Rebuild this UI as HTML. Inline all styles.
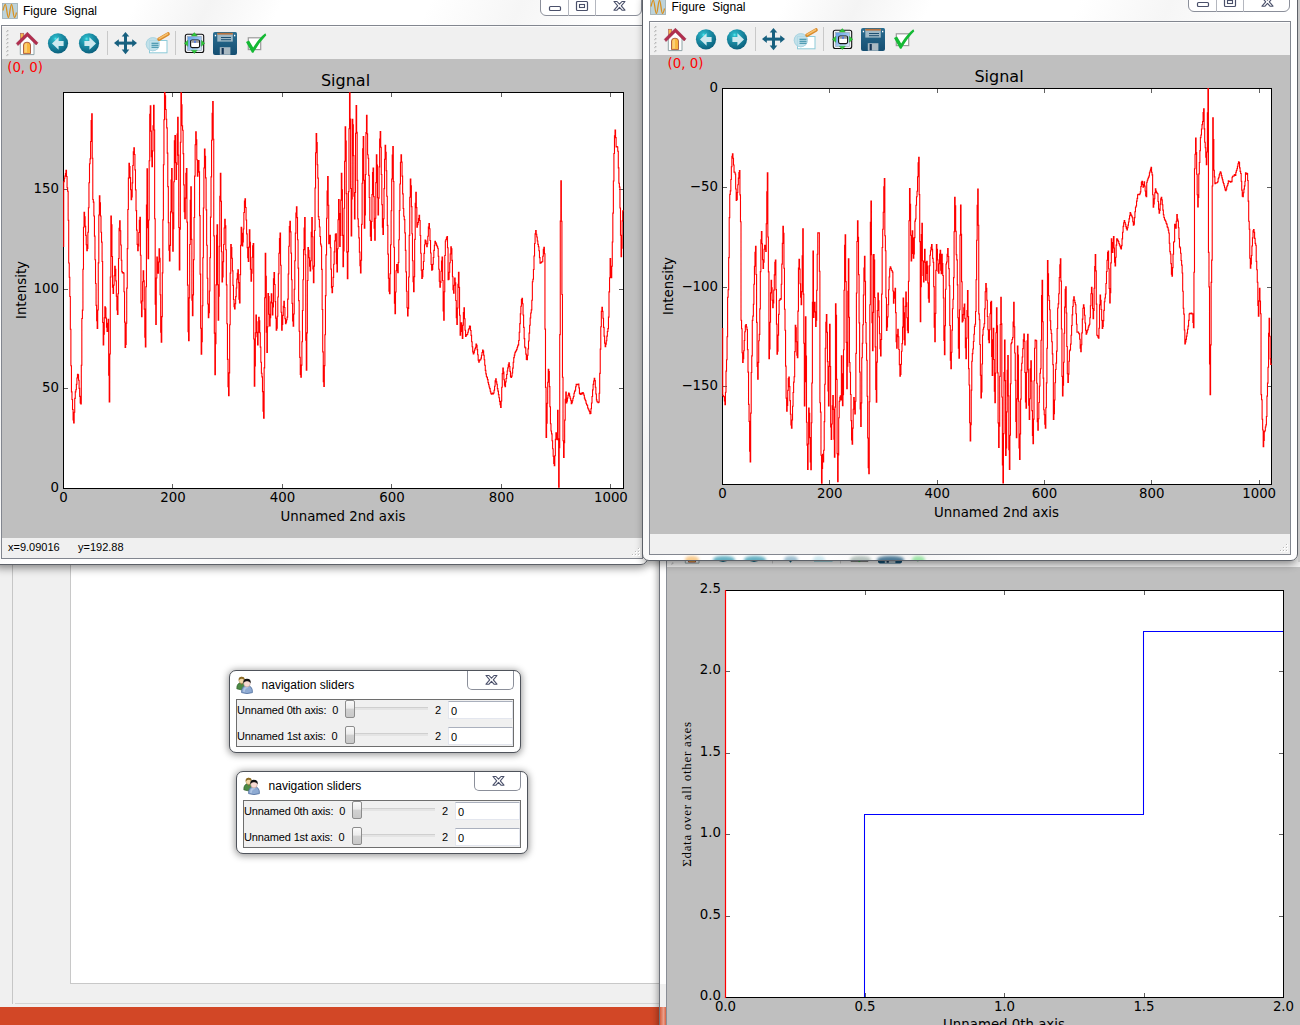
<!DOCTYPE html>
<html><head><meta charset="utf-8"><title>Figure Signal</title>
<style>
html,body{margin:0;padding:0}
body{width:1300px;height:1025px;position:relative;overflow:hidden;background:#f0f0f0;font-family:"Liberation Sans",sans-serif;font-size:12px;color:#000}
div,svg,span{position:absolute}
.mpl{font-family:"DejaVu Sans","Liberation Sans",sans-serif;white-space:nowrap;line-height:1;color:#000}
.tk{font-size:13.33px}
.lb{font-size:13.33px}
.tt{font-size:16px}
.wc{background:#fff;border:1px solid #8b8f9a;border-radius:0 0 6px 6px;box-sizing:border-box}
.wcd{width:1px;background:#b4b7bf}
.ui{white-space:nowrap;line-height:1}
.rot{transform:rotate(-90deg);transform-origin:0 0}
.dl{font-size:11px;letter-spacing:-0.14px}
.sh2{box-shadow:0 1px 7px 1px rgba(0,0,0,0.4)}
.sh{box-shadow:0 5px 8px -2px rgba(0,0,0,0.45)}
</style></head><body>
<svg width="0" height="0" style="left:0;top:0"><defs>
<radialGradient id="gteal" cx="0.38" cy="0.28" r="0.75"><stop offset="0" stop-color="#55f0f5"/><stop offset="0.12" stop-color="#2ab4c4"/><stop offset="0.45" stop-color="#1b8ea6"/><stop offset="1" stop-color="#0b5f7c"/></radialGradient>
<linearGradient id="gblue" x1="0" y1="0" x2="1" y2="1"><stop offset="0" stop-color="#5c9be6"/><stop offset="1" stop-color="#d8ecfb"/></linearGradient>
<linearGradient id="gsave" x1="0" y1="0" x2="0" y2="1"><stop offset="0" stop-color="#2a6d90"/><stop offset="1" stop-color="#154f72"/></linearGradient>
</defs></svg>
<!-- background application -->
<div style="left:12px;top:560px;width:1px;height:444px;background:#c6c6c6"></div>
<div style="left:15px;top:1003px;width:650px;height:1px;background:#d4d4d4"></div>
<div style="left:70px;top:540px;width:600px;height:444px;background:#fff;border:1px solid #c8c8c8;box-sizing:border-box"></div>
<div style="left:0;top:1007px;width:1300px;height:18px;background:#d24726"></div>
<!-- third figure window (behind) -->
<div style="left:659px;top:540px;width:660px;height:500px;background:#fff;border:1px solid #6f737b;box-sizing:border-box;box-shadow:-1px 0 7px rgba(0,0,0,0.4)"></div><div style="left:660px;top:984px;width:6px;height:23px;background:#f0f0f0"></div><div style="left:660px;top:1007px;width:6px;height:18px;background:linear-gradient(90deg,#d9603f,#e9a08c 60%,#d9603f)"></div><div style="left:666px;top:540px;width:640px;height:500px;background:#f0f0f0;border-left:1px solid #8a8e96"></div><div style="left:667px;top:567px;width:640px;height:470px;background:#bfbfbf"></div><div style="left:725px;top:590px;width:559px;height:408px;background:#fff"></div><svg style="left:0;top:0" width="1300" height="1025" viewBox="0 0 1300 1025"><polyline points="725.5,997.5 864.5,997.5 864.5,814.5 1143.5,814.5 1143.5,631.5 1283,631.5" fill="none" stroke="#0000ff" stroke-width="1.05"/><rect x="725.5" y="590.5" width="558" height="407" fill="none" stroke="#000" stroke-width="1" shape-rendering="crispEdges"/><g stroke="#000" stroke-width="1" stroke-opacity="0.62"><path d="M865.5 997 V993 M865.5 591 V595"/><path d="M1004.5 997 V993 M1004.5 591 V595"/><path d="M1144.5 997 V993 M1144.5 591 V595"/><path d="M726 671.5 H730 M1283 671.5 H1279"/><path d="M726 753.5 H730 M1283 753.5 H1279"/><path d="M726 834.5 H730 M1283 834.5 H1279"/><path d="M726 916.5 H730 M1283 916.5 H1279"/></g><path d="M725.5 590 V998" stroke="#ff0000" stroke-width="1.2"/></svg><svg style="left:0;top:500px" width="1300" height="70" viewBox="0 500 1300 70"><g transform="translate(665 508.5)">
<g>
<!-- grip -->
<g fill="#b8b8b8"><rect x="7" y="30" width="1.4" height="1.4"/><rect x="6" y="31" width="1.4" height="1.2" fill="#c8c8c8"/><rect x="7" y="34" width="1.4" height="1.4"/><rect x="6" y="35" width="1.4" height="1.2" fill="#c8c8c8"/><rect x="7" y="38" width="1.4" height="1.4"/><rect x="6" y="39" width="1.4" height="1.2" fill="#c8c8c8"/><rect x="7" y="42" width="1.4" height="1.4"/><rect x="6" y="43" width="1.4" height="1.2" fill="#c8c8c8"/><rect x="7" y="46" width="1.4" height="1.4"/><rect x="6" y="47" width="1.4" height="1.2" fill="#c8c8c8"/><rect x="7" y="50" width="1.4" height="1.4"/><rect x="6" y="51" width="1.4" height="1.2" fill="#c8c8c8"/><rect x="7" y="54" width="1.4" height="1.4"/><rect x="6" y="55" width="1.4" height="1.2" fill="#c8c8c8"/></g>
<!-- home -->
<rect x="20.5" y="33.3" width="3.2" height="6" fill="#f7b64a" stroke="#b4645a" stroke-width="0.7"/>
<path d="M20.3 42 L27.3 35.5 L34 42 L34 54.6 L20.3 54.6 Z" fill="#fdfdfd" stroke="#8fa3a6" stroke-width="1"/>
<path d="M23.5 53.6 L23.5 45 Q23.5 42.2 27 42.2 Q30.5 42.2 30.5 45 L30.5 53.6 Z" fill="#f9b840" stroke="#a8553a" stroke-width="0.9"/>
<path d="M24.5 52.6 L24.5 45 Q24.5 43.2 27 43.2 L27 52.6 Z" fill="#fcd890" opacity="0.7"/>
<path d="M16.3 43.3 L27.4 32.2 L38 42.8 L36.2 45 L27.4 36.2 L18 45.6 Z" fill="#b32d4e" stroke="#8e2540" stroke-width="0.5"/>
<!-- back -->
<circle cx="58" cy="43.3" r="10.1" fill="url(#gteal)"/>
<path d="M52 43.5 L58.6 37.3 L58.6 41 L63.6 41 L63.6 46 L58.6 46 L58.6 49.7 Z" fill="#cfe9ef"/>
<!-- forward -->
<circle cx="89" cy="43.3" r="10.1" fill="url(#gteal)"/>
<path d="M96 43.5 L89.4 37.3 L89.4 41 L84.4 41 L84.4 46 L89.4 46 L89.4 49.7 Z" fill="#cfe9ef"/>
<!-- sep -->
<rect x="107" y="31" width="1" height="24" fill="#c9c9c9"/>
<!-- move -->
<g fill="#17607f" stroke="none">
<rect x="124" y="35" width="3" height="16"/><rect x="117" y="41.6" width="17" height="3"/>
<path d="M125.5 32 L129.3 36.6 L121.7 36.6 Z"/><path d="M125.5 54.2 L129.3 49.6 L121.7 49.6 Z"/>
<path d="M114 43.1 L118.8 39.2 L118.8 47 Z"/><path d="M137 43.1 L132.2 39.2 L132.2 47 Z"/>
</g>
<!-- zoom -->
<rect x="149.5" y="40.5" width="17.5" height="12.3" fill="#ffffff" stroke="#8ecbd9" stroke-width="1"/>
<circle cx="152.8" cy="44.2" r="7" fill="#b9dde8" opacity="0.85"/>
<circle cx="152.8" cy="44.2" r="6.6" fill="none" stroke="#a5d0de" stroke-width="0.8"/>
<g stroke="#2f87a3" stroke-width="1.1"><path d="M151.5 43.2 H158.5 M151.5 45.2 H158.5 M151.5 47.2 H158.5"/></g>
<path d="M159 39.2 L168 34" stroke="#d98a2b" stroke-width="3.6" stroke-linecap="round"/>
<path d="M159.2 38.6 L167.6 33.8" stroke="#f7c06c" stroke-width="1.6" stroke-linecap="round"/>
<!-- sep -->
<rect x="175" y="31" width="1" height="24" fill="#c9c9c9"/>
<!-- subplots -->
<rect x="185.3" y="34.3" width="18.4" height="18.2" rx="2" fill="#eef1f4" stroke="#111" stroke-width="1.1"/>
<rect x="187.6" y="36.4" width="13.8" height="14" fill="url(#gblue)" stroke="#9aa6b4" stroke-width="0.6"/>
<rect x="190.6" y="40" width="9" height="7.6" rx="1.6" fill="#fff" stroke="#111" stroke-width="1.1"/>
<rect x="191.3" y="40.6" width="7.6" height="2.2" fill="#9a9a9a"/><rect x="194" y="40.6" width="2" height="2.2" fill="#5a7fe0"/>
<g fill="#2fc83a" stroke="#1c9a2a" stroke-width="0.4">
<path d="M194.3 32.6 L197.3 36 L191.3 36 Z"/><path d="M194.3 53.6 L197.3 50.2 L191.3 50.2 Z"/>
<path d="M184.4 43.3 L187.8 40.3 L187.8 46.3 Z"/><path d="M204.8 43.3 L201.4 40.3 L201.4 46.3 Z"/>
</g>
<!-- save -->
<path d="M215 32 H235.5 Q237 32 237 33.5 V53 Q237 55 235 55 H215 Q213 55 213 53 V34 Q213 32 215 32 Z" fill="url(#gsave)"/>
<rect x="217.3" y="33" width="15.5" height="8.6" fill="#9fb9c6"/>
<rect x="217.3" y="32.8" width="15.5" height="1.8" fill="#b5713e"/>
<rect x="221" y="37" width="10" height="1" fill="#1d4f70"/><rect x="221" y="39.2" width="10" height="1" fill="#1d4f70"/>
<rect x="214.8" y="34.8" width="1.3" height="1.5" fill="#fff"/><rect x="234" y="34.8" width="1.3" height="1.5" fill="#fff"/>
<rect x="219.8" y="47.2" width="10.6" height="7.6" fill="#a9b9c2"/>
<rect x="221.6" y="48" width="2.2" height="6.2" fill="#153556"/>
<!-- check -->
<rect x="248.3" y="37.8" width="12.4" height="11.8" fill="#fff" stroke="#9b9b9b" stroke-width="1.2"/>
<path d="M246 42 L249 40.5 L253.2 47.4 Q259 38 265.3 33.2 L266.3 35.2 Q259 42.5 253.4 52.8 L252 52.8 Z" fill="#14b934"/>
</g></g></svg><span class="mpl tk" style="left:695.50px;top:1000.4px;width:60px;text-align:center">0.0</span><span class="mpl tk" style="left:835.00px;top:1000.4px;width:60px;text-align:center">0.5</span><span class="mpl tk" style="left:974.50px;top:1000.4px;width:60px;text-align:center">1.0</span><span class="mpl tk" style="left:1114.00px;top:1000.4px;width:60px;text-align:center">1.5</span><span class="mpl tk" style="left:1253.50px;top:1000.4px;width:60px;text-align:center">2.0</span><span class="mpl tk" style="left:661px;top:582.00px;width:60px;text-align:right">2.5</span><span class="mpl tk" style="left:661px;top:663.40px;width:60px;text-align:right">2.0</span><span class="mpl tk" style="left:661px;top:744.80px;width:60px;text-align:right">1.5</span><span class="mpl tk" style="left:661px;top:826.20px;width:60px;text-align:right">1.0</span><span class="mpl tk" style="left:661px;top:907.60px;width:60px;text-align:right">0.5</span><span class="mpl tk" style="left:661px;top:989.00px;width:60px;text-align:right">0.0</span><span class="mpl lb" style="left:904px;top:1018.3px;width:200px;text-align:center">Unnamed 0th axis</span><span class="rot" style="left:680px;top:894px;width:200px;text-align:center;font-family:'Liberation Serif',serif;font-size:13px;line-height:1;white-space:nowrap;letter-spacing:0.7px">Σdata over all other axes</span><!-- left figure window -->
<div class="sh" style="left:-8px;top:-10px;width:656px;height:575px;background:linear-gradient(115deg,#fff 0%,#fff 16%,#f4f4f4 24%,#fff 32%,#fff 48%,#f6f6f6 58%,#fff 68%,#fff 100%);border:1px solid #5d6168;border-radius:7px;box-sizing:border-box"></div><svg style="left:2px;top:3px" width="16" height="16" viewBox="0 0 16 16"><rect x="0.4" y="0.4" width="15.2" height="15.2" fill="#bdd3da" stroke="#9eadb1" stroke-width="0.8"/><path d="M1 7.5 C1.8 4 2.5 1.4 3.3 1.4 C4.6 1.4 5.1 14.5 6.4 14.5 C7.7 14.5 8.2 1.4 9.5 1.4 C10.8 1.4 11.2 14.5 12.5 14.5 C13.4 14.5 13.9 12 14.5 9.5" fill="none" stroke="#d9901e" stroke-width="1.25"/></svg><span class="ui" style="left:23px;top:5px;font-size:12px">Figure&nbsp; Signal</span><div class="wc" style="left:540px;top:-8px;width:102px;height:24px"></div><div class="wcd" style="left:568px;top:0;height:16px"></div><div class="wcd" style="left:595px;top:0;height:16px"></div><svg style="left:540px;top:-0.1999999999999993px" width="102" height="16" viewBox="0 0 102 16"><rect x="9.5" y="6.5" width="11" height="4" rx="1" fill="#fff" stroke="#4a506a" stroke-width="1.2"/><rect x="36.5" y="1.5" width="11" height="9" rx="1" fill="#fff" stroke="#4a506a" stroke-width="1.2"/><rect x="39.5" y="4.5" width="5" height="3" fill="#fff" stroke="#4a506a" stroke-width="1.1"/><path d="M74 1.5 L77 1.5 L79.5 4.2 L82 1.5 L85 1.5 L81.3 5.8 L85 10.2 L82 10.2 L79.5 7.4 L77 10.2 L74 10.2 L77.7 5.8 Z" fill="#fff" stroke="#4a506a" stroke-width="1.1" stroke-linejoin="round"/></svg><div style="left:1px;top:25px;width:642px;height:534px;background:#f0f0f0;border:1px solid #82868f;box-sizing:border-box"></div><div style="left:2px;top:26px;width:640px;height:1px;background:#fcfcfc"></div><div style="left:2px;top:59px;width:640px;height:479px;background:#bfbfbf"></div><div style="left:63px;top:92px;width:561px;height:397px;background:#fff"></div><svg style="left:0;top:0" width="1300" height="570" viewBox="0 0 1300 570"><g transform="translate(0 0)">
<g>
<!-- grip -->
<g fill="#b8b8b8"><rect x="7" y="30" width="1.4" height="1.4"/><rect x="6" y="31" width="1.4" height="1.2" fill="#c8c8c8"/><rect x="7" y="34" width="1.4" height="1.4"/><rect x="6" y="35" width="1.4" height="1.2" fill="#c8c8c8"/><rect x="7" y="38" width="1.4" height="1.4"/><rect x="6" y="39" width="1.4" height="1.2" fill="#c8c8c8"/><rect x="7" y="42" width="1.4" height="1.4"/><rect x="6" y="43" width="1.4" height="1.2" fill="#c8c8c8"/><rect x="7" y="46" width="1.4" height="1.4"/><rect x="6" y="47" width="1.4" height="1.2" fill="#c8c8c8"/><rect x="7" y="50" width="1.4" height="1.4"/><rect x="6" y="51" width="1.4" height="1.2" fill="#c8c8c8"/><rect x="7" y="54" width="1.4" height="1.4"/><rect x="6" y="55" width="1.4" height="1.2" fill="#c8c8c8"/></g>
<!-- home -->
<rect x="20.5" y="33.3" width="3.2" height="6" fill="#f7b64a" stroke="#b4645a" stroke-width="0.7"/>
<path d="M20.3 42 L27.3 35.5 L34 42 L34 54.6 L20.3 54.6 Z" fill="#fdfdfd" stroke="#8fa3a6" stroke-width="1"/>
<path d="M23.5 53.6 L23.5 45 Q23.5 42.2 27 42.2 Q30.5 42.2 30.5 45 L30.5 53.6 Z" fill="#f9b840" stroke="#a8553a" stroke-width="0.9"/>
<path d="M24.5 52.6 L24.5 45 Q24.5 43.2 27 43.2 L27 52.6 Z" fill="#fcd890" opacity="0.7"/>
<path d="M16.3 43.3 L27.4 32.2 L38 42.8 L36.2 45 L27.4 36.2 L18 45.6 Z" fill="#b32d4e" stroke="#8e2540" stroke-width="0.5"/>
<!-- back -->
<circle cx="58" cy="43.3" r="10.1" fill="url(#gteal)"/>
<path d="M52 43.5 L58.6 37.3 L58.6 41 L63.6 41 L63.6 46 L58.6 46 L58.6 49.7 Z" fill="#cfe9ef"/>
<!-- forward -->
<circle cx="89" cy="43.3" r="10.1" fill="url(#gteal)"/>
<path d="M96 43.5 L89.4 37.3 L89.4 41 L84.4 41 L84.4 46 L89.4 46 L89.4 49.7 Z" fill="#cfe9ef"/>
<!-- sep -->
<rect x="107" y="31" width="1" height="24" fill="#c9c9c9"/>
<!-- move -->
<g fill="#17607f" stroke="none">
<rect x="124" y="35" width="3" height="16"/><rect x="117" y="41.6" width="17" height="3"/>
<path d="M125.5 32 L129.3 36.6 L121.7 36.6 Z"/><path d="M125.5 54.2 L129.3 49.6 L121.7 49.6 Z"/>
<path d="M114 43.1 L118.8 39.2 L118.8 47 Z"/><path d="M137 43.1 L132.2 39.2 L132.2 47 Z"/>
</g>
<!-- zoom -->
<rect x="149.5" y="40.5" width="17.5" height="12.3" fill="#ffffff" stroke="#8ecbd9" stroke-width="1"/>
<circle cx="152.8" cy="44.2" r="7" fill="#b9dde8" opacity="0.85"/>
<circle cx="152.8" cy="44.2" r="6.6" fill="none" stroke="#a5d0de" stroke-width="0.8"/>
<g stroke="#2f87a3" stroke-width="1.1"><path d="M151.5 43.2 H158.5 M151.5 45.2 H158.5 M151.5 47.2 H158.5"/></g>
<path d="M159 39.2 L168 34" stroke="#d98a2b" stroke-width="3.6" stroke-linecap="round"/>
<path d="M159.2 38.6 L167.6 33.8" stroke="#f7c06c" stroke-width="1.6" stroke-linecap="round"/>
<!-- sep -->
<rect x="175" y="31" width="1" height="24" fill="#c9c9c9"/>
<!-- subplots -->
<rect x="185.3" y="34.3" width="18.4" height="18.2" rx="2" fill="#eef1f4" stroke="#111" stroke-width="1.1"/>
<rect x="187.6" y="36.4" width="13.8" height="14" fill="url(#gblue)" stroke="#9aa6b4" stroke-width="0.6"/>
<rect x="190.6" y="40" width="9" height="7.6" rx="1.6" fill="#fff" stroke="#111" stroke-width="1.1"/>
<rect x="191.3" y="40.6" width="7.6" height="2.2" fill="#9a9a9a"/><rect x="194" y="40.6" width="2" height="2.2" fill="#5a7fe0"/>
<g fill="#2fc83a" stroke="#1c9a2a" stroke-width="0.4">
<path d="M194.3 32.6 L197.3 36 L191.3 36 Z"/><path d="M194.3 53.6 L197.3 50.2 L191.3 50.2 Z"/>
<path d="M184.4 43.3 L187.8 40.3 L187.8 46.3 Z"/><path d="M204.8 43.3 L201.4 40.3 L201.4 46.3 Z"/>
</g>
<!-- save -->
<path d="M215 32 H235.5 Q237 32 237 33.5 V53 Q237 55 235 55 H215 Q213 55 213 53 V34 Q213 32 215 32 Z" fill="url(#gsave)"/>
<rect x="217.3" y="33" width="15.5" height="8.6" fill="#9fb9c6"/>
<rect x="217.3" y="32.8" width="15.5" height="1.8" fill="#b5713e"/>
<rect x="221" y="37" width="10" height="1" fill="#1d4f70"/><rect x="221" y="39.2" width="10" height="1" fill="#1d4f70"/>
<rect x="214.8" y="34.8" width="1.3" height="1.5" fill="#fff"/><rect x="234" y="34.8" width="1.3" height="1.5" fill="#fff"/>
<rect x="219.8" y="47.2" width="10.6" height="7.6" fill="#a9b9c2"/>
<rect x="221.6" y="48" width="2.2" height="6.2" fill="#153556"/>
<!-- check -->
<rect x="248.3" y="37.8" width="12.4" height="11.8" fill="#fff" stroke="#9b9b9b" stroke-width="1.2"/>
<path d="M246 42 L249 40.5 L253.2 47.4 Q259 38 265.3 33.2 L266.3 35.2 Q259 42.5 253.4 52.8 L252 52.8 Z" fill="#14b934"/>
</g></g><clipPath id="cp0"><rect x="63" y="92" width="561" height="397"/></clipPath><rect x="63.5" y="92.5" width="560" height="396" fill="none" stroke="#000" stroke-width="1" shape-rendering="crispEdges"/><g stroke="#000" stroke-width="1" stroke-opacity="0.62"><path d="M63.5 488 V484 M63.5 93 V97"/><path d="M172.5 488 V484 M172.5 93 V97"/><path d="M282.5 488 V484 M282.5 93 V97"/><path d="M391.5 488 V484 M391.5 93 V97"/><path d="M501.5 488 V484 M501.5 93 V97"/><path d="M610.5 488 V484 M610.5 93 V97"/><path d="M64 488.5 H68 M623 488.5 H619"/><path d="M64 388.5 H68 M623 388.5 H619"/><path d="M64 289.5 H68 M623 289.5 H619"/><path d="M64 189.5 H68 M623 189.5 H619"/></g><path clip-path="url(#cp0)" d="M63.7 247V182M63.50 181.3H63.77V181.8H64.32V178.3H64.87V176.1H65.42V173.6H65.96V170.4H66.51V176.5H67.06V187.7H67.61V191.2H68.15V220.3H68.70V263.0H69.25V277.3H69.80V296.5H70.34V329.2H70.89V365.7H71.44V391.9H71.98V399.5H72.53V409.5H73.08V419.9H73.63V423.0H74.17V412.2H74.72V398.4H75.27V391.9H75.82V389.7H76.36V384.2H76.91V378.0H77.46V374.4H78.01V374.7H78.55V380.2H79.10V388.4H79.65V396.4H80.20V402.9H80.74V404.0H81.29V365.3H81.84V318.5H82.39V310.1H82.93V269.2H83.48V227.2H84.03V212.4H84.58V216.8H85.12V226.2H85.67V235.4H86.22V244.8H86.76V250.7H87.31V248.5H87.86V232.3H88.41V207.8H88.95V182.7H89.50V163.8H90.05V158.9H90.60V141.5H91.14V120.5H91.69V113.9H92.24V158.2H92.79V199.5H93.33V202.1H93.88V216.0H94.43V236.1H94.98V259.7H95.52V283.5H96.07V305.4H96.62V320.6H97.17V328.5H97.71V310.0H98.26V262.9H98.81V215.0H99.36V195.9H99.90V202.9H100.45V216.0H101.00V232.3H101.54V242.1H102.09V261.5H102.64V322.5H103.19V345.0H103.73V334.2H104.28V317.8H104.83V306.8H105.38V308.1H105.92V318.1H106.47V327.2H107.02V331.5H107.57V323.4H108.11V319.3H108.66V375.2H109.21V401.9H109.76V354.0H110.30V277.0H110.85V216.1H111.40V224.9H111.95V256.5H112.49V287.1H113.04V293.4H113.59V285.1H114.14V275.8H114.68V266.3H115.23V269.3H115.78V280.9H116.33V296.2H116.87V309.9H117.42V314.4H117.97V293.7H118.51V258.5H119.06V228.3H119.61V220.9H120.16V230.8H120.70V245.0H121.25V260.3H121.80V271.6H122.35V273.0H122.89V272.5H123.44V273.1H123.99V291.8H124.54V322.1H125.08V347.4H125.63V344.4H126.18V323.3H126.73V288.1H127.27V248.6H127.82V209.5H128.37V178.1H128.92V163.4H129.46V166.6H130.01V177.6H130.56V189.7H131.11V199.6H131.65V197.0H132.20V182.9H132.75V165.5H133.29V151.9H133.84V147.8H134.39V154.5H134.94V169.9H135.48V189.9H136.03V210.6H136.58V230.1H137.13V244.4H137.67V250.8H138.22V245.9H138.77V232.5H139.32V220.4H139.86V217.2H140.41V255.2H140.96V303.0H141.51V316.6H142.05V301.0H142.60V281.7H143.15V270.9H143.70V280.7H144.24V309.1H144.79V337.2H145.34V346.9H145.89V286.7H146.43V205.0H146.98V168.8H147.53V227.8H148.07V258.7H148.62V220.0H149.17V160.8H149.72V114.4H150.26V105.8H150.81V131.1H151.36V156.8H151.91V166.7H152.45V150.9H153.00V125.7H153.55V105.2H154.10V130.0H154.64V218.8H155.19V304.3H155.74V324.4H156.29V278.0H156.83V257.0H157.38V267.9H157.93V273.2H158.48V262.0H159.02V248.7H159.57V258.3H160.12V294.7H160.67V332.3H161.21V342.2H161.76V316.6H162.31V272.9H162.85V219.9H163.40V164.7H163.95V119.8H164.50V92.6H165.04V95.7H165.59V109.5H166.14V119.2H166.69V127.9H167.23V153.1H167.78V186.6H168.33V222.6H168.88V250.1H169.42V260.9H169.97V245.4H170.52V211.8H171.07V180.1H171.61V168.6H172.16V212.9H172.71V251.1H173.26V228.7H173.80V181.8H174.35V140.9H174.90V135.5H175.45V162.7H175.99V179.4H176.54V164.4H177.09V134.1H177.63V117.4H178.18V155.1H178.73V227.5H179.28V270.0H179.82V229.3H180.37V142.3H180.92V92.9H181.47V104.8H182.01V125.7H182.56V130.2H183.11V153.6H183.66V184.9H184.20V211.6H184.75V218.8H185.30V198.1H185.85V173.4H186.39V168.6H186.94V222.1H187.49V285.1H188.04V331.7H188.58V340.7H189.13V297.9H189.68V244.5H190.23V200.4H190.77V186.9H191.32V239.4H191.87V300.3H192.41V315.7H192.96V294.9H193.51V259.6H194.06V217.5H194.60V176.1H195.15V144.7H195.70V131.8H196.25V139.9H196.79V159.8H197.34V176.3H197.89V172.3H198.44V160.6H198.98V171.8H199.53V215.6H200.08V274.1H200.63V328.3H201.17V354.1H201.72V341.7H202.27V305.8H202.82V257.8H203.36V208.0H203.91V168.0H204.46V149.1H205.01V156.3H205.55V177.9H206.10V209.9H206.65V245.3H207.20V278.3H207.74V304.0H208.29V317.8H208.84V312.6H209.38V291.0H209.93V257.6H210.48V217.1H211.03V176.9H211.57V140.2H212.12V113.2H212.67V101.5H213.22V139.3H213.76V235.9H214.31V333.1H214.86V374.6H215.41V343.8H215.95V284.9H216.50V235.2H217.05V224.9H217.60V284.8H218.14V320.1H218.69V296.1H219.24V246.2H219.79V196.4H220.33V173.3H220.88V201.2H221.43V251.7H221.98V281.9H222.52V276.9H223.07V261.8H223.62V244.5H224.16V228.0H224.71V219.3H225.26V225.9H225.81V249.8H226.35V284.9H226.90V323.8H227.45V359.4H228.00V386.6H228.54V395.6H229.09V372.9H229.64V324.8H230.19V273.1H230.73V244.5H231.28V247.5H231.83V258.2H232.38V270.9H232.92V285.4H233.47V299.5H234.02V306.6H234.57V309.0H235.11V303.8H235.66V296.6H236.21V288.0H236.76V279.1H237.30V273.2H237.85V269.9H238.40V282.6H238.94V299.3H239.49V303.0H240.04V274.6H240.59V245.3H241.13V227.2H241.68V233.2H242.23V245.9H242.78V241.9H243.32V229.0H243.87V212.5H244.42V201.0H244.97V198.9H245.51V207.5H246.06V220.0H246.61V233.9H247.16V247.6H247.70V257.8H248.25V261.5H248.80V247.1H249.35V229.9H249.89V242.2H250.44V269.3H250.99V281.1H251.54V273.1H252.08V257.3H252.63V245.7H253.18V243.6H253.72V339.0H254.27V386.2H254.82V366.0H255.37V332.8H255.91V315.0H256.46V321.8H257.01V336.6H257.56V344.9H258.10V332.3H258.65V317.3H259.20V320.9H259.75V332.7H260.29V347.1H260.84V362.3H261.39V373.2H261.94V376.9H262.48V391.6H263.03V411.1H263.58V418.1H264.13V367.9H264.67V297.7H265.22V253.2H265.77V276.2H266.32V332.2H266.86V352.5H267.41V326.7H267.96V293.5H268.50V296.6H269.05V314.3H269.60V325.9H270.15V317.6H270.69V302.0H271.24V293.7H271.79V302.9H272.34V314.9H272.88V306.9H273.43V278.9H273.98V272.5H274.53V284.5H275.07V301.6H275.62V318.1H276.17V330.1H276.72V328.1H277.26V316.3H277.81V297.0H278.36V273.8H278.91V253.3H279.45V238.5H280.00V233.0H280.55V265.2H281.10V312.3H281.64V330.3H282.19V324.5H282.74V315.4H283.28V306.2H283.83V301.3H284.38V307.5H284.93V318.6H285.47V323.7H286.02V322.3H286.57V319.8H287.12V317.1H287.66V299.1H288.21V274.0H288.76V246.3H289.31V226.6H289.85V221.4H290.40V231.9H290.95V253.1H291.50V279.8H292.04V303.4H292.59V320.9H293.14V326.2H293.69V314.0H294.23V289.3H294.78V260.7H295.33V233.1H295.88V213.1H296.42V206.7H296.97V217.6H297.52V239.8H298.07V268.1H298.61V300.6H299.16V331.2H299.71V357.4H300.25V374.4H300.80V377.3H301.35V365.1H301.90V341.7H302.44V310.5H302.99V279.7H303.54V249.6H304.09V228.1H304.63V217.6H305.18V254.8H305.73V340.3H306.28V370.2H306.82V332.9H307.37V280.5H307.92V247.5H308.47V250.3H309.01V257.7H309.56V266.2H310.11V271.0H310.66V260.7H311.20V232.2H311.75V217.5H312.30V236.7H312.85V269.0H313.39V282.8H313.94V266.1H314.49V230.5H315.03V188.0H315.58V152.7H316.13V133.5H316.68V142.5H317.22V164.7H317.77V178.1H318.32V216.6H318.87V219.5H319.41V227.0H319.96V236.5H320.51V244.1H321.06V246.0H321.60V269.4H322.15V309.5H322.70V351.9H323.25V381.8H323.79V386.4H324.34V365.6H324.89V334.7H325.44V295.6H325.98V254.9H326.53V218.2H327.08V191.1H327.63V176.6H328.17V205.3H328.72V243.7H329.27V239.6H329.81V235.2H330.36V247.7H330.91V269.1H331.46V287.7H332.00V292.7H332.55V286.5H333.10V277.4H333.65V264.2H334.19V251.9H334.74V240.9H335.29V234.2H335.84V233.8H336.38V263.7H336.93V272.0H337.48V248.7H338.03V219.8H338.57V199.6H339.12V213.5H339.67V246.4H340.22V235.4H340.76V200.1H341.31V173.4H341.86V189.7H342.41V235.4H342.95V266.7H343.50V250.9H344.05V208.3H344.59V161.2H345.14V126.8H345.69V141.1H346.24V193.6H346.78V252.2H347.33V278.7H347.88V251.8H348.43V191.6H348.97V128.7H349.52V92.7H350.07V119.1H350.62V188.5H351.16V235.9H351.71V199.0H352.26V119.4H352.81V124.9H353.35V155.6H353.90V196.1H354.45V219.0H355.00V192.5H355.54V133.3H356.09V105.5H356.64V132.2H357.19V180.4H357.73V218.9H358.28V226.6H358.83V237.9H359.37V252.1H359.92V265.8H360.47V273.0H361.02V260.3H361.56V224.4H362.11V183.3H362.66V148.9H363.21V136.6H363.75V180.3H364.30V228.1H364.85V214.9H365.40V174.5H365.94V132.6H366.49V115.2H367.04V133.7H367.59V154.7H368.13V158.2H368.68V175.4H369.23V197.5H369.78V220.4H370.32V236.3H370.87V240.5H371.42V221.5H371.97V194.6H372.51V172.5H373.06V168.0H373.61V196.6H374.15V228.2H374.70V240.2H375.25V218.3H375.80V182.6H376.34V154.8H376.89V165.0H377.44V197.8H377.99V214.9H378.53V198.2H379.08V166.9H379.63V139.1H380.18V131.6H380.72V147.2H381.27V174.5H381.82V204.6H382.37V227.2H382.91V234.4H383.46V218.7H384.01V188.6H384.56V159.2H385.10V145.4H385.65V152.3H386.20V170.8H386.75V196.3H387.29V225.4H387.84V254.1H388.39V278.2H388.93V291.3H389.48V293.8H390.03V273.8H390.58V244.8H391.12V210.8H391.67V179.0H392.22V155.1H392.77V146.5H393.31V181.5H393.86V247.2H394.41V303.1H394.96V313.8H395.50V292.0H396.05V270.7H396.60V264.5H397.15V270.6H397.69V272.8H398.24V262.5H398.79V239.7H399.34V210.5H399.88V184.0H400.43V162.2H400.98V154.8H401.53V162.1H402.07V176.1H402.62V193.9H403.17V208.5H403.72V216.3H404.26V219.6H404.81V232.9H405.36V250.4H405.90V271.9H406.45V291.3H407.00V307.8H407.55V316.0H408.09V308.5H408.64V277.0H409.19V235.4H409.74V197.3H410.28V179.0H410.83V185.8H411.38V206.6H411.93V233.8H412.47V260.7H413.02V281.6H413.57V291.6H414.12V276.8H414.66V239.4H415.21V203.4H415.76V192.4H416.31V207.6H416.85V227.2H417.40V224.6H417.95V222.5H418.50V218.6H419.04V215.3H419.59V220.5H420.14V235.5H420.68V253.2H421.23V270.2H421.78V278.4H422.33V276.8H422.87V269.5H423.42V261.5H423.97V253.4H424.52V244.8H425.06V240.0H425.61V241.0H426.16V243.5H426.71V246.7H427.25V243.8H427.80V236.3H428.35V227.1H428.90V223.6H429.44V228.7H429.99V240.5H430.54V253.0H431.09V264.5H431.63V270.1H432.18V269.5H432.73V264.3H433.28V257.5H433.82V250.4H434.37V245.2H434.92V241.3H435.46V242.5H436.01V243.7H436.56V245.4H437.11V246.6H437.65V248.3H438.20V256.3H438.75V269.2H439.30V281.3H439.84V287.3H440.39V282.4H440.94V271.3H441.49V261.0H442.03V257.0H442.58V280.5H443.13V310.9H443.68V320.1H444.22V291.8H444.77V255.5H445.32V241.0H445.87V239.5H446.41V237.8H446.96V236.6H447.51V247.7H448.06V279.6H448.60V279.3H449.15V272.3H449.70V262.7H450.24V254.0H450.79V246.7H451.34V248.7H451.89V260.4H452.43V276.7H452.98V289.8H453.53V293.2H454.08V285.2H454.62V278.0H455.17V282.8H455.72V300.5H456.27V317.7H456.81V324.5H457.36V308.0H457.91V284.3H458.46V272.4H459.00V287.4H459.55V315.3H460.10V335.3H460.65V331.5H461.19V322.7H461.74V331.4H462.29V338.5H462.84V325.2H463.38V312.5H463.93V307.9H464.48V318.8H465.02V330.3H465.57V336.4H466.12V335.3H466.67V334.6H467.21V334.3H467.76V332.2H468.31V329.8H468.86V328.6H469.40V326.0H469.95V326.2H470.50V330.5H471.05V335.4H471.59V341.8H472.14V346.8H472.69V351.9H473.24V353.9H473.78V352.8H474.33V350.2H474.88V348.8H475.43V347.2H475.97V344.0H476.52V345.3H477.07V349.6H477.62V354.8H478.16V360.1H478.71V362.3H479.26V360.8H479.80V359.9H480.35V359.7H480.90V358.1H481.45V355.2H481.99V352.5H482.54V350.1H483.09V351.0H483.64V355.3H484.18V359.7H484.73V365.2H485.28V370.4H485.83V373.9H486.37V376.5H486.92V377.6H487.47V379.6H488.02V382.6H488.56V384.8H489.11V387.0H489.66V388.6H490.21V391.3H490.75V393.3H491.30V394.1H491.85V394.0H492.40V393.1H492.94V394.0H493.49V393.0H494.04V390.3H494.59V386.3H495.13V380.9H495.68V378.8H496.23V381.9H496.77V384.3H497.32V388.6H497.87V391.1H498.42V394.6H498.96V397.7H499.51V401.5H500.06V404.7H500.61V407.4H501.15V401.0H501.70V387.2H502.25V373.6H502.80V368.0H503.34V372.1H503.89V379.8H504.44V385.3H504.99V386.7H505.53V381.9H506.08V378.5H506.63V374.5H507.18V371.0H507.72V367.9H508.27V364.9H508.82V362.8H509.37V366.5H509.91V371.4H510.46V376.7H511.01V377.5H511.55V376.1H512.10V373.0H512.65V368.1H513.20V362.3H513.74V357.6H514.29V355.1H514.84V352.7H515.39V351.6H515.93V350.8H516.48V349.6H517.03V347.8H517.58V346.0H518.12V344.9H518.67V340.5H519.22V332.2H519.77V323.6H520.31V313.9H520.86V306.2H521.41V299.5H521.96V298.4H522.50V303.8H523.05V315.0H523.60V327.4H524.15V338.6H524.69V347.1H525.24V347.9H525.79V354.1H526.33V359.5H526.88V359.6H527.43V355.3H527.98V348.9H528.52V341.0H529.07V333.1H529.62V325.2H530.17V318.0H530.71V313.0H531.26V309.9H531.81V300.2H532.36V281.7H532.90V279.3H533.45V269.5H534.00V256.0H534.55V243.5H535.09V233.7H535.64V230.6H536.19V234.2H536.74V237.0H537.28V241.0H537.83V244.4H538.38V246.7H538.93V250.7H539.47V257.6H540.02V263.3H540.57V263.0H541.11V262.4H541.66V261.8H542.21V261.7H542.76V256.2H543.30V249.2H543.85V247.4H544.40V253.8H544.95V329.1H545.49V387.4H546.04V437.5H546.59V423.3H547.14V403.2H547.68V382.2H548.23V369.2H548.78V371.5H549.33V386.6H549.87V406.8H550.42V423.8H550.97V431.0H551.52V433.9H552.06V440.7H552.61V448.8H553.16V456.3H553.71V463.4H554.25V465.7H554.80V455.8H555.35V439.2H555.89V432.7H556.44V438.2H556.99V439.6H557.54V410.2H558.08V438.8H558.63V487.1H559.18V447.7H559.73V334.6H560.27V221.1H560.82V180.7H561.37V221.3H561.92V294.5H562.46V377.2H563.01V440.7H563.56V457.5H564.11V442.6H564.65V420.1H565.20V399.4H565.75V392.1H566.30V403.0H566.84V401.2H567.39V398.0H567.94V395.2H568.49V393.1H569.03V393.8H569.58V396.2H570.13V398.3H570.67V400.3H571.22V403.8H571.77V402.8H572.32V400.8H572.86V398.3H573.41V396.5H573.96V393.2H574.51V391.4H575.05V390.2H575.60V386.8H576.15V384.3H576.70V384.6H577.24V384.3H577.79V384.7H578.34V384.0H578.89V387.9H579.43V393.6H579.98V393.9H580.53V394.5H581.08V393.1H581.62V393.9H582.17V393.0H582.72V392.6H583.27V393.7H583.81V395.3H584.36V398.1H584.91V399.7H585.46V400.7H586.00V403.2H586.55V404.8H587.10V405.2H587.64V408.0H588.19V409.0H588.74V410.3H589.29V411.5H589.83V413.7H590.38V413.5H590.93V408.8H591.48V403.0H592.02V396.5H592.57V389.9H593.12V384.4H593.67V381.0H594.21V378.2H594.76V380.6H595.31V387.2H595.86V394.0H596.40V399.9H596.95V401.8H597.50V402.0H598.05V402.8H598.59V402.2H599.14V393.3H599.69V373.4H600.24V349.1H600.78V326.7H601.33V311.4H601.88V307.4H602.42V311.2H602.97V318.3H603.52V327.4H604.07V336.1H604.61V343.1H605.16V346.7H605.71V344.3H606.26V340.7H606.80V336.1H607.35V331.5H607.90V328.6H608.45V317.1H608.99V291.9H609.54V277.8H610.09V258.5H610.64V271.3H611.18V277.7H611.73V266.2H612.28V242.0H612.83V213.1H613.37V181.0H613.92V153.5H614.47V135.8H615.02V130.0H615.56V137.6H616.11V146.9H616.66V146.6H617.20V147.0H617.75V151.3H618.30V167.9H618.85V183.3H619.39V187.1H619.94V208.0H620.49V235.3H621.04V256.8H621.58V248.1H622.13V220.9H622.68V210.8H623.23V211.1H623.50" fill="none" stroke="#ff0000" stroke-width="1.1" stroke-linejoin="miter"/></svg><span class="mpl tt" style="left:245.5px;top:73px;width:200px;text-align:center">Signal</span><span class="mpl lb" style="left:243.0px;top:510px;width:200px;text-align:center">Unnamed 2nd axis</span><span class="mpl lb rot" style="left:15px;top:340.0px;width:100px;text-align:center">Intensity</span><span class="mpl" style="left:7.2px;top:61px;font-size:13.33px;color:#ff0000">(0, 0)</span><span class="mpl tk" style="left:33.50px;top:491px;width:60px;text-align:center">0</span><span class="mpl tk" style="left:142.98px;top:491px;width:60px;text-align:center">200</span><span class="mpl tk" style="left:252.46px;top:491px;width:60px;text-align:center">400</span><span class="mpl tk" style="left:361.94px;top:491px;width:60px;text-align:center">600</span><span class="mpl tk" style="left:471.42px;top:491px;width:60px;text-align:center">800</span><span class="mpl tk" style="left:580.90px;top:491px;width:60px;text-align:center">1000</span><span class="mpl tk" style="left:-1px;top:481.00px;width:60px;text-align:right">0</span><span class="mpl tk" style="left:-1px;top:381.33px;width:60px;text-align:right">50</span><span class="mpl tk" style="left:-1px;top:281.67px;width:60px;text-align:right">100</span><span class="mpl tk" style="left:-1px;top:182.00px;width:60px;text-align:right">150</span><span class="ui" style="left:8px;top:542px;font-size:11px">x=9.09016</span><span class="ui" style="left:78px;top:542px;font-size:11px">y=192.88</span><!-- right figure window -->
<div class="sh" style="left:642px;top:-10px;width:656px;height:571px;background:linear-gradient(115deg,#fff 0%,#fff 16%,#f4f4f4 24%,#fff 32%,#fff 48%,#f6f6f6 58%,#fff 68%,#fff 100%);border:1px solid #5d6168;border-radius:7px;box-sizing:border-box"></div><svg style="left:650px;top:-1px" width="16" height="16" viewBox="0 0 16 16"><rect x="0.4" y="0.4" width="15.2" height="15.2" fill="#bdd3da" stroke="#9eadb1" stroke-width="0.8"/><path d="M1 7.5 C1.8 4 2.5 1.4 3.3 1.4 C4.6 1.4 5.1 14.5 6.4 14.5 C7.7 14.5 8.2 1.4 9.5 1.4 C10.8 1.4 11.2 14.5 12.5 14.5 C13.4 14.5 13.9 12 14.5 9.5" fill="none" stroke="#d9901e" stroke-width="1.25"/></svg><span class="ui" style="left:671.5px;top:1px;font-size:12px">Figure&nbsp; Signal</span><div class="wc" style="left:1188px;top:-8px;width:102px;height:20px"></div><div class="wcd" style="left:1216px;top:0;height:12px"></div><div class="wcd" style="left:1243px;top:0;height:12px"></div><svg style="left:1188px;top:-4.199999999999999px" width="102" height="16" viewBox="0 0 102 16"><rect x="9.5" y="6.5" width="11" height="4" rx="1" fill="#fff" stroke="#4a506a" stroke-width="1.2"/><rect x="36.5" y="1.5" width="11" height="9" rx="1" fill="#fff" stroke="#4a506a" stroke-width="1.2"/><rect x="39.5" y="4.5" width="5" height="3" fill="#fff" stroke="#4a506a" stroke-width="1.1"/><path d="M74 1.5 L77 1.5 L79.5 4.2 L82 1.5 L85 1.5 L81.3 5.8 L85 10.2 L82 10.2 L79.5 7.4 L77 10.2 L74 10.2 L77.7 5.8 Z" fill="#fff" stroke="#4a506a" stroke-width="1.1" stroke-linejoin="round"/></svg><div style="left:649px;top:21px;width:642px;height:534px;background:#f0f0f0;border:1px solid #82868f;box-sizing:border-box"></div><div style="left:650px;top:22px;width:640px;height:1px;background:#fcfcfc"></div><div style="left:650px;top:55px;width:640px;height:479px;background:#bfbfbf"></div><div style="left:722px;top:88px;width:550px;height:397px;background:#fff"></div><svg style="left:0;top:0" width="1300" height="570" viewBox="0 0 1300 570"><g transform="translate(648 -4)">
<g>
<!-- grip -->
<g fill="#b8b8b8"><rect x="7" y="30" width="1.4" height="1.4"/><rect x="6" y="31" width="1.4" height="1.2" fill="#c8c8c8"/><rect x="7" y="34" width="1.4" height="1.4"/><rect x="6" y="35" width="1.4" height="1.2" fill="#c8c8c8"/><rect x="7" y="38" width="1.4" height="1.4"/><rect x="6" y="39" width="1.4" height="1.2" fill="#c8c8c8"/><rect x="7" y="42" width="1.4" height="1.4"/><rect x="6" y="43" width="1.4" height="1.2" fill="#c8c8c8"/><rect x="7" y="46" width="1.4" height="1.4"/><rect x="6" y="47" width="1.4" height="1.2" fill="#c8c8c8"/><rect x="7" y="50" width="1.4" height="1.4"/><rect x="6" y="51" width="1.4" height="1.2" fill="#c8c8c8"/><rect x="7" y="54" width="1.4" height="1.4"/><rect x="6" y="55" width="1.4" height="1.2" fill="#c8c8c8"/></g>
<!-- home -->
<rect x="20.5" y="33.3" width="3.2" height="6" fill="#f7b64a" stroke="#b4645a" stroke-width="0.7"/>
<path d="M20.3 42 L27.3 35.5 L34 42 L34 54.6 L20.3 54.6 Z" fill="#fdfdfd" stroke="#8fa3a6" stroke-width="1"/>
<path d="M23.5 53.6 L23.5 45 Q23.5 42.2 27 42.2 Q30.5 42.2 30.5 45 L30.5 53.6 Z" fill="#f9b840" stroke="#a8553a" stroke-width="0.9"/>
<path d="M24.5 52.6 L24.5 45 Q24.5 43.2 27 43.2 L27 52.6 Z" fill="#fcd890" opacity="0.7"/>
<path d="M16.3 43.3 L27.4 32.2 L38 42.8 L36.2 45 L27.4 36.2 L18 45.6 Z" fill="#b32d4e" stroke="#8e2540" stroke-width="0.5"/>
<!-- back -->
<circle cx="58" cy="43.3" r="10.1" fill="url(#gteal)"/>
<path d="M52 43.5 L58.6 37.3 L58.6 41 L63.6 41 L63.6 46 L58.6 46 L58.6 49.7 Z" fill="#cfe9ef"/>
<!-- forward -->
<circle cx="89" cy="43.3" r="10.1" fill="url(#gteal)"/>
<path d="M96 43.5 L89.4 37.3 L89.4 41 L84.4 41 L84.4 46 L89.4 46 L89.4 49.7 Z" fill="#cfe9ef"/>
<!-- sep -->
<rect x="107" y="31" width="1" height="24" fill="#c9c9c9"/>
<!-- move -->
<g fill="#17607f" stroke="none">
<rect x="124" y="35" width="3" height="16"/><rect x="117" y="41.6" width="17" height="3"/>
<path d="M125.5 32 L129.3 36.6 L121.7 36.6 Z"/><path d="M125.5 54.2 L129.3 49.6 L121.7 49.6 Z"/>
<path d="M114 43.1 L118.8 39.2 L118.8 47 Z"/><path d="M137 43.1 L132.2 39.2 L132.2 47 Z"/>
</g>
<!-- zoom -->
<rect x="149.5" y="40.5" width="17.5" height="12.3" fill="#ffffff" stroke="#8ecbd9" stroke-width="1"/>
<circle cx="152.8" cy="44.2" r="7" fill="#b9dde8" opacity="0.85"/>
<circle cx="152.8" cy="44.2" r="6.6" fill="none" stroke="#a5d0de" stroke-width="0.8"/>
<g stroke="#2f87a3" stroke-width="1.1"><path d="M151.5 43.2 H158.5 M151.5 45.2 H158.5 M151.5 47.2 H158.5"/></g>
<path d="M159 39.2 L168 34" stroke="#d98a2b" stroke-width="3.6" stroke-linecap="round"/>
<path d="M159.2 38.6 L167.6 33.8" stroke="#f7c06c" stroke-width="1.6" stroke-linecap="round"/>
<!-- sep -->
<rect x="175" y="31" width="1" height="24" fill="#c9c9c9"/>
<!-- subplots -->
<rect x="185.3" y="34.3" width="18.4" height="18.2" rx="2" fill="#eef1f4" stroke="#111" stroke-width="1.1"/>
<rect x="187.6" y="36.4" width="13.8" height="14" fill="url(#gblue)" stroke="#9aa6b4" stroke-width="0.6"/>
<rect x="190.6" y="40" width="9" height="7.6" rx="1.6" fill="#fff" stroke="#111" stroke-width="1.1"/>
<rect x="191.3" y="40.6" width="7.6" height="2.2" fill="#9a9a9a"/><rect x="194" y="40.6" width="2" height="2.2" fill="#5a7fe0"/>
<g fill="#2fc83a" stroke="#1c9a2a" stroke-width="0.4">
<path d="M194.3 32.6 L197.3 36 L191.3 36 Z"/><path d="M194.3 53.6 L197.3 50.2 L191.3 50.2 Z"/>
<path d="M184.4 43.3 L187.8 40.3 L187.8 46.3 Z"/><path d="M204.8 43.3 L201.4 40.3 L201.4 46.3 Z"/>
</g>
<!-- save -->
<path d="M215 32 H235.5 Q237 32 237 33.5 V53 Q237 55 235 55 H215 Q213 55 213 53 V34 Q213 32 215 32 Z" fill="url(#gsave)"/>
<rect x="217.3" y="33" width="15.5" height="8.6" fill="#9fb9c6"/>
<rect x="217.3" y="32.8" width="15.5" height="1.8" fill="#b5713e"/>
<rect x="221" y="37" width="10" height="1" fill="#1d4f70"/><rect x="221" y="39.2" width="10" height="1" fill="#1d4f70"/>
<rect x="214.8" y="34.8" width="1.3" height="1.5" fill="#fff"/><rect x="234" y="34.8" width="1.3" height="1.5" fill="#fff"/>
<rect x="219.8" y="47.2" width="10.6" height="7.6" fill="#a9b9c2"/>
<rect x="221.6" y="48" width="2.2" height="6.2" fill="#153556"/>
<!-- check -->
<rect x="248.3" y="37.8" width="12.4" height="11.8" fill="#fff" stroke="#9b9b9b" stroke-width="1.2"/>
<path d="M246 42 L249 40.5 L253.2 47.4 Q259 38 265.3 33.2 L266.3 35.2 Q259 42.5 253.4 52.8 L252 52.8 Z" fill="#14b934"/>
</g></g><clipPath id="cp648"><rect x="722" y="88" width="550" height="397"/></clipPath><rect x="722.5" y="88.5" width="549" height="396" fill="none" stroke="#000" stroke-width="1" shape-rendering="crispEdges"/><g stroke="#000" stroke-width="1" stroke-opacity="0.62"><path d="M722.5 484 V480 M722.5 89 V93"/><path d="M829.5 484 V480 M829.5 89 V93"/><path d="M937.5 484 V480 M937.5 89 V93"/><path d="M1044.5 484 V480 M1044.5 89 V93"/><path d="M1151.5 484 V480 M1151.5 89 V93"/><path d="M1259.5 484 V480 M1259.5 89 V93"/><path d="M723 88.5 H727 M1271 88.5 H1267"/><path d="M723 187.5 H727 M1271 187.5 H1267"/><path d="M723 287.5 H727 M1271 287.5 H1267"/><path d="M723 386.5 H727 M1271 386.5 H1267"/></g><path clip-path="url(#cp648)" d="M722.7 328V394M722.50 394.5H722.77V395.5H723.30V396.2H723.84V396.8H724.38V401.0H724.91V404.6H725.45V392.2H725.99V371.1H726.52V359.7H727.06V336.7H727.60V297.3H728.13V289.8H728.67V257.6H729.21V217.6H729.74V194.4H730.28V190.9H730.82V179.5H731.35V166.8H731.89V156.4H732.43V153.9H732.96V158.3H733.50V165.0H734.04V172.1H734.57V172.3H735.11V174.0H735.65V189.0H736.18V200.4H736.72V199.5H737.26V192.5H737.79V184.7H738.33V178.1H738.87V172.6H739.40V170.6H739.94V194.9H740.48V221.7H741.01V320.3H741.55V328.7H742.09V352.7H742.62V362.4H743.16V358.8H743.70V350.8H744.23V340.5H744.77V331.8H745.31V325.7H745.84V324.5H746.38V327.0H746.92V329.6H747.45V349.6H747.99V372.1H748.53V404.4H749.06V421.4H749.60V451.1H750.14V462.0H750.67V413.1H751.21V372.5H751.75V355.9H752.28V320.4H752.82V316.1H753.36V304.2H753.89V284.2H754.43V266.3H754.97V252.2H755.50V246.3H756.04V274.5H756.58V322.4H757.11V366.4H757.65V379.3H758.19V362.4H758.72V340.8H759.26V334.4H759.80V308.9H760.33V271.6H760.87V239.7H761.41V231.6H761.94V243.7H762.48V259.8H763.02V268.4H763.55V262.2H764.09V249.3H764.63V245.3H765.16V249.1H765.70V251.4H766.24V223.8H766.77V191.7H767.31V172.8H767.85V237.0H768.38V271.9H768.92V358.8H769.46V348.9H769.99V322.2H770.53V292.9H771.07V280.4H771.60V287.8H772.14V300.2H772.68V307.8H773.21V302.9H773.75V290.1H774.29V274.9H774.82V262.3H775.36V260.0H775.90V289.6H776.43V324.1H776.97V354.2H777.51V351.2H778.04V335.1H778.58V314.4H779.12V300.5H779.65V299.9H780.19V298.6H780.73V299.3H781.26V284.2H781.80V264.1H782.34V243.4H782.87V226.4H783.41V233.2H783.95V268.2H784.48V309.3H785.02V330.3H785.56V366.1H786.09V398.1H786.63V411.3H787.17V405.4H787.70V390.4H788.24V378.5H788.78V377.0H789.31V386.6H789.85V400.6H790.39V414.3H790.92V425.0H791.46V428.3H792.00V420.0H792.53V406.3H793.07V392.5H793.61V382.1H794.14V376.7H794.68V351.6H795.22V325.2H795.75V327.9H796.29V341.7H796.83V355.1H797.36V357.6H797.90V311.1H798.44V268.0H798.97V259.2H799.51V269.1H800.05V283.8H800.58V297.2H801.12V304.8H801.66V291.6H802.19V255.8H802.73V228.8H803.27V294.1H803.80V343.2H804.34V406.0H804.88V381.8H805.41V316.9H805.95V356.1H806.49V422.2H807.02V445.1H807.56V469.5H808.10V444.0H808.63V408.0H809.17V413.3H809.71V437.6H810.24V462.0H810.78V469.8H811.32V422.7H811.85V383.0H812.39V302.2H812.93V251.1H813.46V317.5H814.00V309.1H814.54V302.4H815.07V311.9H815.61V326.5H816.15V320.1H816.68V290.3H817.22V254.2H817.76V232.7H818.29V233.0H818.83V232.8H819.37V271.2H819.90V402.7H820.44V412.1H820.98V455.2H821.51V483.3H822.05V468.5H822.59V454.3H823.12V462.0H823.66V450.3H824.20V421.6H824.73V384.2H825.27V348.2H825.81V322.2H826.34V314.5H826.88V332.3H827.42V361.6H827.95V391.0H828.49V405.9H829.03V366.2H829.56V324.2H830.10V366.5H830.64V427.0H831.17V439.5H831.71V424.0H832.25V405.7H832.78V395.6H833.32V409.4H833.86V439.3H834.39V457.3H834.93V407.1H835.47V303.8H836.00V315.3H836.54V379.4H837.08V453.6H837.61V481.8H838.15V454.9H838.69V417.7H839.22V401.4H839.76V397.4H840.30V395.9H840.83V400.0H841.37V355.7H841.91V373.9H842.44V405.8H842.98V394.8H843.52V349.7H844.05V290.2H844.59V245.2H845.13V234.7H845.66V281.6H846.20V342.4H846.74V388.8H847.27V366.2H847.81V291.3H848.35V258.9H848.88V317.3H849.42V362.5H849.96V372.3H850.49V394.5H851.03V420.6H851.57V440.0H852.10V444.2H852.64V428.1H853.18V409.2H853.71V397.5H854.25V403.9H854.79V413.9H855.32V401.3H855.86V353.4H856.40V293.0H856.93V241.5H857.47V220.8H858.01V237.4H858.54V274.6H859.08V322.9H859.62V372.1H860.15V409.0H860.69V426.5H861.23V402.9H861.76V357.8H862.30V343.2H862.84V324.7H863.37V295.0H863.91V268.0H864.45V256.4H864.98V281.2H865.52V322.5H866.06V343.2H866.59V360.2H867.13V396.3H867.67V438.0H868.20V467.6H868.74V473.6H869.28V401.8H869.81V304.7H870.35V222.3H870.89V201.1H871.42V254.7H871.96V322.8H872.50V350.8H873.03V312.4H873.57V254.5H874.11V260.1H874.64V297.5H875.18V346.9H875.72V389.5H876.25V402.1H876.79V362.1H877.33V310.5H877.86V293.1H878.40V300.8H878.94V316.9H879.47V333.6H880.01V348.7H880.55V356.0H881.08V339.5H881.62V294.1H882.16V247.5H882.69V229.2H883.23V212.2H883.77V186.8H884.30V178.6H884.84V235.7H885.38V250.8H885.91V297.8H886.45V330.4H886.99V327.0H887.52V316.9H888.06V304.6H888.60V289.7H889.13V277.0H889.67V268.7H890.21V266.7H890.74V268.3H891.28V270.2H891.82V270.8H892.35V272.1H892.89V291.0H893.43V303.1H893.96V298.2H894.50V292.0H895.04V288.3H895.57V312.6H896.11V341.6H896.65V348.3H897.18V334.8H897.72V329.3H898.26V336.8H898.79V349.5H899.33V364.6H899.87V376.2H900.40V374.5H900.94V364.2H901.48V351.2H902.01V343.6H902.55V327.1H903.09V298.1H903.62V312.9H904.16V339.7H904.70V344.9H905.23V306.4H905.77V292.1H906.30V302.7H906.84V317.8H907.38V330.1H907.91V332.7H908.45V281.3H908.99V220.8H909.52V188.6H910.06V204.2H910.60V235.3H911.13V260.9H911.67V253.4H912.21V230.7H912.74V238.0H913.28V258.2H913.82V254.0H914.35V237.6H914.89V221.1H915.43V219.0H915.96V205.3H916.50V196.7H917.04V191.2H917.57V176.8H918.11V162.7H918.65V157.3H919.18V194.6H919.72V241.6H920.26V321.6H920.79V286.8H921.33V234.6H921.87V223.2H922.40V260.6H922.94V275.4H923.48V281.9H924.01V261.5H924.55V249.2H925.09V262.3H925.62V280.3H926.16V273.5H926.70V261.2H927.23V266.0H927.77V282.9H928.31V298.3H928.84V302.3H929.38V265.8H929.92V255.2H930.45V250.9H930.99V247.4H931.53V244.6H932.06V249.4H932.60V258.4H933.14V262.2H933.67V286.6H934.21V327.2H934.75V341.6H935.28V313.4H935.82V270.4H936.36V244.5H936.89V249.4H937.43V259.9H937.97V271.1H938.50V273.3H939.04V263.7H939.58V254.1H940.11V250.2H940.65V270.1H941.19V273.7H941.72V254.3H942.26V263.5H942.80V275.5H943.33V298.0H943.87V340.4H944.41V354.6H944.94V325.8H945.48V289.2H946.02V264.0H946.55V262.0H947.09V254.2H947.63V248.5H948.16V256.5H948.70V268.6H949.24V285.7H949.77V325.5H950.31V360.2H950.85V368.8H951.38V352.3H951.92V330.1H952.46V308.7H952.99V299.2H953.53V277.6H954.07V231.7H954.60V197.3H955.14V205.9H955.68V231.2H956.21V254.8H956.75V259.9H957.29V284.9H957.82V317.8H958.36V348.1H958.90V358.2H959.43V309.8H959.97V235.1H960.51V205.0H961.04V234.2H961.58V281.8H962.12V322.0H962.65V320.8H963.19V314.6H963.73V307.9H964.26V304.0H964.80V318.4H965.34V347.7H965.87V358.7H966.41V338.1H966.95V310.5H967.48V290.6H968.02V316.6H968.56V368.6H969.09V385.0H969.63V422.7H970.17V441.0H970.70V424.7H971.24V390.1H971.78V361.3H972.31V353.6H972.85V349.0H973.39V341.5H973.92V334.2H974.46V326.4H975.00V324.2H975.53V311.5H976.07V279.8H976.61V240.3H977.14V205.3H977.68V189.0H978.22V225.3H978.75V313.9H979.29V319.7H979.83V344.5H980.36V375.3H980.90V398.0H981.44V392.0H981.97V364.0H982.51V335.1H983.05V329.2H983.58V327.3H984.12V323.8H984.66V308.9H985.19V291.8H985.73V283.6H986.27V288.2H986.80V300.2H987.34V316.5H987.88V329.8H988.41V339.7H988.95V342.6H989.49V329.8H990.02V313.7H990.56V302.6H991.10V301.3H991.63V356.4H992.17V375.5H992.71V339.9H993.24V328.3H993.78V359.5H994.32V391.1H994.85V402.7H995.39V373.0H995.93V332.7H996.46V307.8H997.00V325.9H997.54V372.9H998.07V422.9H998.61V447.4H999.15V426.3H999.68V376.4H1000.22V324.5H1000.76V297.4H1001.29V323.9H1001.83V397.0H1002.37V464.9H1002.90V483.0H1003.44V433.6H1003.98V372.6H1004.51V340.1H1005.05V380.6H1005.59V455.4H1006.12V448.0H1006.66V411.9H1007.20V370.3H1007.73V355.5H1008.27V395.9H1008.81V449.6H1009.34V469.5H1009.88V435.3H1010.42V383.8H1010.95V343.8H1011.49V342.6H1012.03V339.5H1012.56V337.6H1013.10V322.0H1013.64V302.2H1014.17V326.7H1014.71V353.0H1015.25V380.4H1015.78V421.5H1016.32V437.6H1016.86V398.9H1017.39V346.0H1017.93V355.1H1018.47V401.2H1019.00V448.0H1019.54V459.5H1020.08V434.0H1020.61V399.1H1021.15V370.1H1021.69V363.3H1022.22V357.0H1022.76V348.6H1023.30V339.9H1023.83V334.0H1024.37V341.2H1024.91V372.5H1025.44V402.0H1025.98V408.3H1026.52V372.2H1027.05V340.7H1027.59V334.4H1028.13V369.8H1028.66V405.3H1029.20V419.5H1029.74V398.8H1030.27V368.9H1030.81V360.7H1031.35V381.1H1031.88V410.6H1032.42V435.4H1032.96V443.8H1033.49V419.1H1034.03V380.7H1034.57V348.3H1035.10V340.1H1035.64V340.3H1036.18V340.8H1036.71V383.3H1037.25V421.8H1037.79V430.2H1038.32V418.8H1038.86V402.5H1039.40V386.0H1039.93V373.2H1040.47V368.7H1041.01V340.3H1041.54V295.6H1042.08V280.3H1042.62V321.7H1043.15V378.1H1043.69V409.7H1044.23V414.8H1044.76V424.2H1045.30V428.1H1045.84V407.8H1046.37V382.9H1046.91V348.2H1047.45V260.6H1047.98V273.8H1048.52V295.8H1049.06V300.5H1049.59V309.7H1050.13V320.8H1050.67V329.7H1051.20V333.5H1051.74V341.7H1052.28V353.9H1052.81V364.6H1053.35V419.5H1053.89V413.8H1054.42V400.0H1054.96V382.7H1055.50V369.5H1056.03V363.1H1056.57V351.1H1057.11V328.5H1057.64V308.0H1058.18V303.9H1058.72V293.7H1059.25V277.5H1059.79V264.8H1060.33V258.7H1060.86V281.1H1061.40V329.0H1061.94V376.4H1062.47V395.9H1063.01V385.2H1063.55V362.3H1064.08V333.2H1064.62V307.1H1065.16V289.2H1065.69V286.8H1066.23V313.0H1066.77V346.5H1067.30V373.8H1067.84V382.5H1068.38V374.2H1068.91V361.2H1069.45V350.7H1069.99V349.9H1070.52V344.1H1071.06V335.3H1071.60V325.5H1072.13V314.9H1072.67V306.5H1073.21V300.1H1073.74V296.7H1074.28V300.4H1074.82V302.6H1075.35V304.8H1075.89V313.8H1076.43V324.2H1076.96V332.2H1077.50V332.0H1078.04V332.1H1078.57V333.3H1079.11V333.9H1079.65V339.3H1080.18V348.3H1080.72V351.6H1081.26V344.8H1081.79V332.9H1082.33V319.1H1082.87V308.2H1083.40V304.8H1083.94V307.7H1084.48V315.2H1085.01V323.0H1085.55V330.3H1086.09V334.1H1086.62V332.8H1087.16V330.8H1087.70V329.4H1088.23V327.1H1088.77V325.6H1089.30V324.3H1089.84V317.8H1090.38V305.7H1090.91V293.7H1091.45V287.3H1091.99V293.7H1092.52V308.5H1093.06V318.6H1093.60V310.5H1094.13V288.3H1094.67V266.5H1095.21V254.5H1095.74V270.9H1096.28V304.1H1096.82V335.2H1097.35V335.7H1097.89V337.1H1098.43V338.3H1098.96V328.2H1099.50V304.9H1100.04V295.1H1100.57V300.4H1101.11V309.5H1101.65V320.2H1102.18V328.5H1102.72V326.4H1103.26V320.6H1103.79V310.4H1104.33V301.8H1104.87V298.0H1105.40V294.0H1105.94V283.5H1106.48V271.5H1107.01V260.2H1107.55V252.6H1108.09V251.1H1108.62V268.7H1109.16V288.5H1109.70V302.9H1110.23V292.6H1110.77V262.9H1111.31V238.9H1111.84V245.6H1112.38V252.4H1112.92V242.5H1113.45V236.5H1113.99V248.0H1114.53V262.3H1115.06V266.0H1115.60V257.3H1116.14V245.1H1116.67V238.7H1117.21V239.2H1117.75V240.6H1118.28V241.6H1118.82V243.5H1119.36V244.9H1119.89V246.2H1120.43V247.9H1120.97V248.9H1121.50V245.6H1122.04V238.9H1122.58V232.2H1123.11V226.4H1123.65V222.7H1124.19V220.6H1124.72V222.5H1125.26V224.3H1125.80V226.6H1126.33V228.4H1126.87V230.0H1127.41V227.7H1127.94V225.1H1128.48V222.0H1129.02V218.9H1129.55V215.8H1130.09V212.6H1130.63V214.1H1131.16V215.3H1131.70V216.3H1132.24V217.8H1132.77V221.7H1133.31V225.3H1133.85V224.1H1134.38V217.6H1134.92V211.7H1135.46V207.2H1135.99V206.0H1136.53V201.1H1137.07V198.4H1137.60V194.7H1138.14V194.4H1138.68V194.3H1139.21V194.7H1139.75V193.7H1140.29V191.9H1140.82V186.5H1141.36V182.2H1141.90V181.4H1142.43V184.5H1142.97V187.1H1143.51V184.5H1144.04V181.8H1144.58V186.1H1145.12V191.0H1145.65V195.8H1146.19V196.6H1146.73V182.2H1147.26V180.2H1147.80V178.7H1148.34V177.4H1148.87V176.0H1149.41V172.7H1149.95V171.0H1150.48V169.0H1151.02V167.3H1151.56V172.3H1152.09V174.9H1152.63V194.7H1153.17V207.3H1153.70V204.0H1154.24V198.7H1154.78V192.8H1155.31V188.8H1155.85V191.1H1156.39V192.4H1156.92V193.2H1157.46V193.8H1158.00V201.5H1158.53V209.1H1159.07V213.1H1159.61V210.5H1160.14V204.1H1160.68V198.8H1161.22V197.2H1161.75V199.9H1162.29V204.8H1162.83V210.1H1163.36V214.7H1163.90V217.5H1164.44V219.3H1164.97V220.4H1165.51V221.3H1166.05V223.3H1166.58V224.1H1167.12V226.9H1167.66V227.7H1168.19V230.1H1168.73V233.0H1169.27V243.2H1169.80V251.6H1170.34V254.0H1170.88V263.6H1171.41V274.2H1171.95V276.2H1172.49V267.6H1173.02V254.3H1173.56V242.2H1174.10V241.5H1174.63V224.3H1175.17V225.3H1175.71V228.1H1176.24V221.3H1176.78V214.6H1177.32V219.1H1177.85V221.0H1178.39V227.7H1178.93V238.6H1179.46V246.9H1180.00V247.9H1180.54V253.2H1181.07V260.5H1181.61V265.1H1182.15V273.0H1182.68V291.3H1183.22V308.2H1183.76V314.1H1184.29V330.0H1184.83V344.0H1185.37V341.9H1185.90V339.4H1186.44V336.1H1186.98V333.1H1187.51V329.3H1188.05V326.1H1188.59V320.4H1189.12V314.0H1189.66V313.4H1190.20V313.5H1190.73V313.7H1191.27V313.0H1191.81V313.9H1192.34V313.7H1192.88V322.4H1193.42V327.8H1193.95V272.2H1194.49V168.8H1195.03V154.2H1195.56V138.0H1196.10V152.6H1196.64V174.3H1197.17V194.7H1197.71V207.0H1198.25V197.4H1198.78V173.9H1199.32V162.5H1199.86V150.6H1200.39V137.6H1200.93V135.0H1201.47V129.0H1202.00V124.6H1202.54V121.5H1203.08V112.6H1203.61V108.7H1204.15V128.9H1204.69V142.2H1205.22V147.7H1205.76V157.1H1206.30V164.6H1206.83V152.0H1207.37V112.9H1207.91V87.2H1208.44V252.4H1208.98V286.9H1209.52V364.0H1210.05V394.7H1210.59V344.9H1211.13V282.4H1211.66V260.1H1212.20V186.0H1212.74V117.9H1213.27V139.6H1213.81V170.3H1214.35V176.9H1214.88V183.7H1215.42V183.1H1215.96V182.9H1216.49V182.8H1217.03V182.7H1217.57V181.7H1218.10V178.7H1218.64V177.2H1219.18V174.9H1219.71V173.3H1220.25V171.7H1220.79V173.0H1221.32V175.6H1221.86V177.9H1222.40V179.9H1222.93V182.1H1223.47V183.6H1224.01V185.7H1224.54V187.8H1225.08V190.0H1225.62V190.7H1226.15V189.2H1226.69V186.8H1227.23V185.5H1227.76V183.6H1228.30V180.9H1228.84V181.3H1229.37V181.5H1229.91V181.8H1230.45V182.2H1230.98V181.4H1231.52V181.6H1232.06V177.3H1232.59V176.3H1233.13V176.1H1233.67V176.0H1234.20V174.9H1234.74V174.5H1235.28V175.4H1235.81V172.2H1236.35V170.5H1236.89V168.7H1237.42V166.2H1237.96V163.7H1238.50V161.7H1239.03V162.5H1239.57V167.9H1240.11V171.4H1240.64V173.5H1241.18V181.3H1241.72V190.1H1242.25V196.3H1242.79V196.8H1243.33V192.7H1243.86V189.1H1244.40V185.9H1244.94V181.3H1245.47V172.9H1246.01V174.1H1246.55V173.3H1247.08V173.5H1247.62V180.5H1248.16V201.1H1248.69V221.3H1249.23V229.2H1249.77V258.2H1250.30V268.2H1250.84V263.9H1251.38V255.5H1251.91V246.0H1252.45V237.9H1252.99V230.9H1253.52V229.6H1254.06V232.3H1254.60V238.4H1255.13V243.4H1255.67V245.3H1256.21V261.4H1256.74V269.7H1257.28V282.2H1257.82V305.4H1258.35V316.2H1258.89V300.8H1259.43V288.3H1259.96V301.1H1260.50V313.8H1261.04V394.6H1261.57V399.8H1262.11V419.2H1262.65V430.0H1263.18V446.6H1263.72V440.5H1264.26V431.6H1264.79V430.7H1265.33V427.0H1265.87V424.9H1266.40V416.5H1266.94V396.1H1267.48V383.1H1268.01V367.3H1268.55V333.3H1269.09V318.4H1269.62V336.2H1270.16V358.9H1270.70V364.4H1271.23V363.7H1271.50" fill="none" stroke="#ff0000" stroke-width="1.1" stroke-linejoin="miter"/></svg><span class="mpl tt" style="left:899.0px;top:69px;width:200px;text-align:center">Signal</span><span class="mpl lb" style="left:896.5px;top:506px;width:200px;text-align:center">Unnamed 2nd axis</span><span class="mpl lb rot" style="left:662px;top:336.0px;width:100px;text-align:center">Intensity</span><span class="mpl" style="left:667.6px;top:57px;font-size:13.33px;color:#ff0000">(0, 0)</span><span class="mpl tk" style="left:692.50px;top:487px;width:60px;text-align:center">0</span><span class="mpl tk" style="left:799.83px;top:487px;width:60px;text-align:center">200</span><span class="mpl tk" style="left:907.16px;top:487px;width:60px;text-align:center">400</span><span class="mpl tk" style="left:1014.49px;top:487px;width:60px;text-align:center">600</span><span class="mpl tk" style="left:1121.82px;top:487px;width:60px;text-align:center">800</span><span class="mpl tk" style="left:1229.15px;top:487px;width:60px;text-align:center">1000</span><span class="mpl tk" style="left:658px;top:81.00px;width:60px;text-align:right">0</span><span class="mpl tk" style="left:658px;top:180.33px;width:60px;text-align:right">−50</span><span class="mpl tk" style="left:658px;top:279.67px;width:60px;text-align:right">−100</span><span class="mpl tk" style="left:658px;top:379.00px;width:60px;text-align:right">−150</span><!-- blurred toolbar of the window behind, seen through the glass frame -->
<div style="left:650px;top:555px;width:640px;height:5.5px;overflow:hidden"><div style="left:34.5px;top:0.5px;width:14.5px;height:8px;background:#f7c27a;border-radius:45%;filter:blur(1.6px);opacity:0.85"></div><div style="left:63px;top:0.5px;width:22.0px;height:8px;background:#4aa3b8;border-radius:45%;filter:blur(1.6px);opacity:0.85"></div><div style="left:93.60000000000002px;top:0.5px;width:22.2px;height:8px;background:#4aa3b8;border-radius:45%;filter:blur(1.6px);opacity:0.85"></div><div style="left:134px;top:0.5px;width:14.0px;height:8px;background:#8fb5c9;border-radius:45%;filter:blur(1.6px);opacity:0.85"></div><div style="left:162.60000000000002px;top:0.5px;width:12.4px;height:8px;background:#c5e3ec;border-radius:45%;filter:blur(1.6px);opacity:0.85"></div><div style="left:199.5px;top:0.5px;width:21.0px;height:8px;background:#a9b8b2;border-radius:45%;filter:blur(1.6px);opacity:0.85"></div><div style="left:226.60000000000002px;top:0.5px;width:27.1px;height:8px;background:#2f6485;border-radius:45%;filter:blur(1.6px);opacity:0.85"></div><div style="left:262px;top:0.5px;width:12.6px;height:8px;background:#8fe39a;border-radius:45%;filter:blur(1.6px);opacity:0.85"></div></div><div style="left:650px;top:560px;width:640px;height:1px;background:#5d6168"></div><div style="left:638px;top:548px;width:2px;height:2px;background:#fdfdfd"></div><div style="left:638px;top:548px;width:1px;height:1px;background:#b9b9b9"></div><div style="left:635px;top:551px;width:2px;height:2px;background:#fdfdfd"></div><div style="left:635px;top:551px;width:1px;height:1px;background:#b9b9b9"></div><div style="left:638px;top:551px;width:2px;height:2px;background:#fdfdfd"></div><div style="left:638px;top:551px;width:1px;height:1px;background:#b9b9b9"></div><div style="left:632px;top:554px;width:2px;height:2px;background:#fdfdfd"></div><div style="left:632px;top:554px;width:1px;height:1px;background:#b9b9b9"></div><div style="left:635px;top:554px;width:2px;height:2px;background:#fdfdfd"></div><div style="left:635px;top:554px;width:1px;height:1px;background:#b9b9b9"></div><div style="left:638px;top:554px;width:2px;height:2px;background:#fdfdfd"></div><div style="left:638px;top:554px;width:1px;height:1px;background:#b9b9b9"></div><div style="left:1286px;top:544px;width:2px;height:2px;background:#fdfdfd"></div><div style="left:1286px;top:544px;width:1px;height:1px;background:#b9b9b9"></div><div style="left:1283px;top:547px;width:2px;height:2px;background:#fdfdfd"></div><div style="left:1283px;top:547px;width:1px;height:1px;background:#b9b9b9"></div><div style="left:1286px;top:547px;width:2px;height:2px;background:#fdfdfd"></div><div style="left:1286px;top:547px;width:1px;height:1px;background:#b9b9b9"></div><div style="left:1280px;top:550px;width:2px;height:2px;background:#fdfdfd"></div><div style="left:1280px;top:550px;width:1px;height:1px;background:#b9b9b9"></div><div style="left:1283px;top:550px;width:2px;height:2px;background:#fdfdfd"></div><div style="left:1283px;top:550px;width:1px;height:1px;background:#b9b9b9"></div><div style="left:1286px;top:550px;width:2px;height:2px;background:#fdfdfd"></div><div style="left:1286px;top:550px;width:1px;height:1px;background:#b9b9b9"></div><div style="left:1298px;top:0;width:2px;height:562px;background:#c8c8c8"></div><!-- navigation slider dialogs -->
<div class="sh2" style="left:229px;top:670px;width:292px;height:83px;background:#fff;border:1px solid #4f535b;border-radius:7px;box-sizing:border-box"></div><svg style="left:236px;top:676px" width="18" height="18" viewBox="0 0 18 18"><path d="M0.8 12.8 Q0.6 6.8 5.4 6.6 Q9.4 6.8 9.2 12 L9 13.4 Q5 14.4 0.8 12.8 Z" fill="#4d8a44" stroke="#2f5f2c" stroke-width="0.7"/><path d="M5.2 6.8 L5.8 9 L6.4 6.8 Z" fill="#c83a2a"/><ellipse cx="5.6" cy="4.3" rx="2.7" ry="3.1" fill="#f2d6a6" stroke="#9a7a3a" stroke-width="0.4"/><path d="M2.7 4.4 Q2.2 0.8 5.6 0.8 Q9 0.8 8.6 4.2 Q7.2 2.4 5.6 2.7 Q3.8 2.7 2.7 4.4 Z" fill="#8a6a24"/><path d="M5.6 16.6 Q5.2 9.8 11 9.6 Q16.8 9.8 16.4 16.6 Q11 18.6 5.6 16.6 Z" fill="#8eaad2" stroke="#4d6c9c" stroke-width="0.8"/><path d="M7.2 15.8 Q7 11 11 10.8 Q12 11 12.4 12 Q9 12 8.6 16.2 Z" fill="#b9cde8" opacity="0.8"/><ellipse cx="11" cy="7.4" rx="3.3" ry="3.5" fill="#f8dad2" stroke="#a08078" stroke-width="0.4"/><path d="M7.3 7.2 Q6.8 2.8 11 2.8 Q15.2 2.8 14.7 7.2 Q13.2 4.9 11 5.3 Q8.8 4.9 7.3 7.2 Z" fill="#111"/></svg><span class="ui" style="left:261.6px;top:679px;font-size:12px">navigation sliders</span><div style="left:467px;top:671px;width:47px;height:19px;background:#fff;border:1px solid #8b8f9a;border-top:none;border-radius:0 0 5px 5px;box-sizing:border-box"></div><svg style="left:480px;top:673.6px" width="23" height="12" viewBox="68 0 23 12"><path d="M74 1.5 L77 1.5 L79.5 4.2 L82 1.5 L85 1.5 L81.3 5.8 L85 10.2 L82 10.2 L79.5 7.4 L77 10.2 L74 10.2 L77.7 5.8 Z" fill="#fff" stroke="#4a506a" stroke-width="1.1" stroke-linejoin="round"/></svg><div style="left:236px;top:699px;width:278px;height:48px;background:#f0f0f0;border:1px solid #6e6e6e;box-sizing:border-box"></div><span class="ui dl" style="left:237px;top:704.5px">Unnamed 0th axis:&nbsp; 0</span><div style="left:350px;top:707px;width:78px;height:3px;background:#e4e4e4;border-top:1px solid #cfcfcf;box-sizing:border-box"></div><div style="left:345px;top:700.4px;width:10px;height:17.6px;border:1px solid #8c8c8c;border-radius:2px;box-sizing:border-box;background:linear-gradient(#fafafa,#ececec 45%,#d2d2d2 50%,#c8c8c8)"></div><span class="ui dl" style="left:435px;top:704.5px">2</span><div style="left:447.5px;top:701px;width:65.5px;height:18px;background:#fff;border:1px solid #e3e6ee;border-top-color:#aab0bd;box-sizing:border-box"></div><span class="ui dl" style="left:451px;top:705.5px">0</span><span class="ui dl" style="left:237px;top:730.5px">Unnamed 1st axis:&nbsp; 0</span><div style="left:350px;top:733px;width:78px;height:3px;background:#e4e4e4;border-top:1px solid #cfcfcf;box-sizing:border-box"></div><div style="left:345px;top:726.4px;width:10px;height:17.6px;border:1px solid #8c8c8c;border-radius:2px;box-sizing:border-box;background:linear-gradient(#fafafa,#ececec 45%,#d2d2d2 50%,#c8c8c8)"></div><span class="ui dl" style="left:435px;top:730.5px">2</span><div style="left:447.5px;top:727px;width:65.5px;height:18px;background:#fff;border:1px solid #e3e6ee;border-top-color:#aab0bd;box-sizing:border-box"></div><span class="ui dl" style="left:451px;top:731.5px">0</span>
<div class="sh2" style="left:236px;top:771px;width:292px;height:83px;background:#fff;border:1px solid #4f535b;border-radius:7px;box-sizing:border-box"></div><svg style="left:243px;top:777px" width="18" height="18" viewBox="0 0 18 18"><path d="M0.8 12.8 Q0.6 6.8 5.4 6.6 Q9.4 6.8 9.2 12 L9 13.4 Q5 14.4 0.8 12.8 Z" fill="#4d8a44" stroke="#2f5f2c" stroke-width="0.7"/><path d="M5.2 6.8 L5.8 9 L6.4 6.8 Z" fill="#c83a2a"/><ellipse cx="5.6" cy="4.3" rx="2.7" ry="3.1" fill="#f2d6a6" stroke="#9a7a3a" stroke-width="0.4"/><path d="M2.7 4.4 Q2.2 0.8 5.6 0.8 Q9 0.8 8.6 4.2 Q7.2 2.4 5.6 2.7 Q3.8 2.7 2.7 4.4 Z" fill="#8a6a24"/><path d="M5.6 16.6 Q5.2 9.8 11 9.6 Q16.8 9.8 16.4 16.6 Q11 18.6 5.6 16.6 Z" fill="#8eaad2" stroke="#4d6c9c" stroke-width="0.8"/><path d="M7.2 15.8 Q7 11 11 10.8 Q12 11 12.4 12 Q9 12 8.6 16.2 Z" fill="#b9cde8" opacity="0.8"/><ellipse cx="11" cy="7.4" rx="3.3" ry="3.5" fill="#f8dad2" stroke="#a08078" stroke-width="0.4"/><path d="M7.3 7.2 Q6.8 2.8 11 2.8 Q15.2 2.8 14.7 7.2 Q13.2 4.9 11 5.3 Q8.8 4.9 7.3 7.2 Z" fill="#111"/></svg><span class="ui" style="left:268.6px;top:780px;font-size:12px">navigation sliders</span><div style="left:474px;top:772px;width:47px;height:19px;background:#fff;border:1px solid #8b8f9a;border-top:none;border-radius:0 0 5px 5px;box-sizing:border-box"></div><svg style="left:487px;top:774.6px" width="23" height="12" viewBox="68 0 23 12"><path d="M74 1.5 L77 1.5 L79.5 4.2 L82 1.5 L85 1.5 L81.3 5.8 L85 10.2 L82 10.2 L79.5 7.4 L77 10.2 L74 10.2 L77.7 5.8 Z" fill="#fff" stroke="#4a506a" stroke-width="1.1" stroke-linejoin="round"/></svg><div style="left:243px;top:800px;width:278px;height:48px;background:#f0f0f0;border:1px solid #6e6e6e;box-sizing:border-box"></div><span class="ui dl" style="left:244px;top:805.5px">Unnamed 0th axis:&nbsp; 0</span><div style="left:357px;top:808px;width:78px;height:3px;background:#e4e4e4;border-top:1px solid #cfcfcf;box-sizing:border-box"></div><div style="left:352px;top:801.4px;width:10px;height:17.6px;border:1px solid #8c8c8c;border-radius:2px;box-sizing:border-box;background:linear-gradient(#fafafa,#ececec 45%,#d2d2d2 50%,#c8c8c8)"></div><span class="ui dl" style="left:442px;top:805.5px">2</span><div style="left:454.5px;top:802px;width:65.5px;height:18px;background:#fff;border:1px solid #e3e6ee;border-top-color:#aab0bd;box-sizing:border-box"></div><span class="ui dl" style="left:458px;top:806.5px">0</span><span class="ui dl" style="left:244px;top:831.5px">Unnamed 1st axis:&nbsp; 0</span><div style="left:357px;top:834px;width:78px;height:3px;background:#e4e4e4;border-top:1px solid #cfcfcf;box-sizing:border-box"></div><div style="left:352px;top:827.4px;width:10px;height:17.6px;border:1px solid #8c8c8c;border-radius:2px;box-sizing:border-box;background:linear-gradient(#fafafa,#ececec 45%,#d2d2d2 50%,#c8c8c8)"></div><span class="ui dl" style="left:442px;top:831.5px">2</span><div style="left:454.5px;top:828px;width:65.5px;height:18px;background:#fff;border:1px solid #e3e6ee;border-top-color:#aab0bd;box-sizing:border-box"></div><span class="ui dl" style="left:458px;top:832.5px">0</span>
</body></html>
